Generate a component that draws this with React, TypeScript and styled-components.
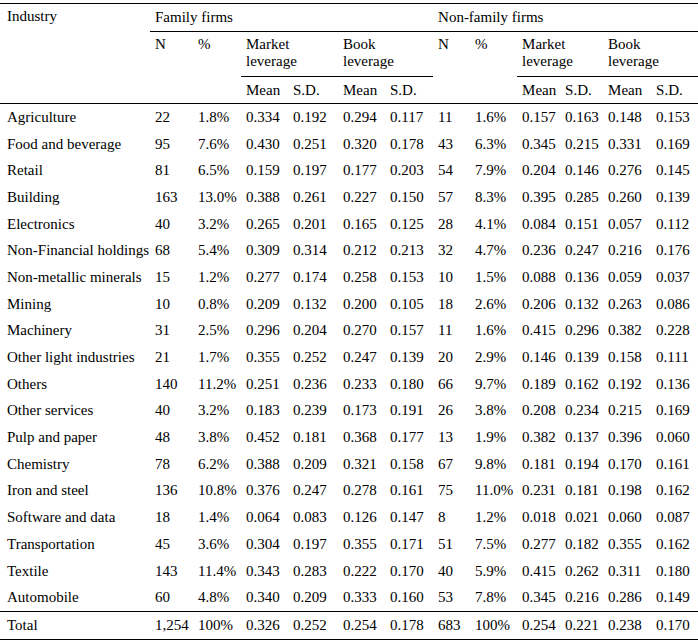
import React from "react";
import styled, { createGlobalStyle } from "styled-components";

const Global = createGlobalStyle`
  html, body { margin: 0; padding: 0; background: #fff; }
  body { font-family: "Liberation Serif", "Times New Roman", serif; color: #000; }
`;

const Table = styled.table`
  margin-top: 3px;
  width: 698px;
  table-layout: fixed;
  border-collapse: separate;
  border-spacing: 0;
  font-family: "Liberation Serif", "Times New Roman", serif;
  font-size: 15px;
  line-height: 17px;
  color: #000;
`;

const Head = styled.th<{ $top?: boolean; $bottom?: boolean; $first?: boolean; $mid?: boolean }>`
  font-family: "Liberation Serif", "Times New Roman", serif;
  font-size: 15px;
  line-height: 17px;
  font-weight: normal;
  text-align: left;
  vertical-align: ${(p) => (p.$mid ? "middle" : "top")};
  padding: ${(p) => (p.$mid ? 0 : 4)}px 0 0 ${(p) => (p.$first ? 7 : 5)}px;
  border-top: ${(p) => (p.$top ? "1px solid #000" : "none")};
  border-bottom: ${(p) => (p.$bottom ? "1px solid #000" : "none")};
  white-space: nowrap;
`;

const HeadRow = styled.tr<{ $h: number }>`
  height: ${(p) => p.$h}px;
`;

const BodyRow = styled.tr<{ $total?: boolean }>`
  height: ${(p) => (p.$total ? 29 : 26.7)}px;
`;

const Cell = styled.td<{ $first?: boolean; $total?: boolean }>`
  font-family: "Liberation Serif", "Times New Roman", serif;
  font-size: 15px;
  line-height: 17px;
  padding: 0 0 0 ${(p) => (p.$first ? 7 : 5)}px;
  vertical-align: middle;
  white-space: nowrap;
  border-top: ${(p) => (p.$total ? "1px solid #000" : "none")};
  border-bottom: ${(p) => (p.$total ? "1px solid #000" : "none")};
`;

const widths = [150, 43, 48, 47, 50, 47, 48, 37, 47, 43, 43, 48, 47];

type Row = [string, ...string[]];

const rows: Row[] = [
  ["Agriculture", "22", "1.8%", "0.334", "0.192", "0.294", "0.117", "11", "1.6%", "0.157", "0.163", "0.148", "0.153"],
  ["Food and beverage", "95", "7.6%", "0.430", "0.251", "0.320", "0.178", "43", "6.3%", "0.345", "0.215", "0.331", "0.169"],
  ["Retail", "81", "6.5%", "0.159", "0.197", "0.177", "0.203", "54", "7.9%", "0.204", "0.146", "0.276", "0.145"],
  ["Building", "163", "13.0%", "0.388", "0.261", "0.227", "0.150", "57", "8.3%", "0.395", "0.285", "0.260", "0.139"],
  ["Electronics", "40", "3.2%", "0.265", "0.201", "0.165", "0.125", "28", "4.1%", "0.084", "0.151", "0.057", "0.112"],
  ["Non-Financial holdings", "68", "5.4%", "0.309", "0.314", "0.212", "0.213", "32", "4.7%", "0.236", "0.247", "0.216", "0.176"],
  ["Non-metallic minerals", "15", "1.2%", "0.277", "0.174", "0.258", "0.153", "10", "1.5%", "0.088", "0.136", "0.059", "0.037"],
  ["Mining", "10", "0.8%", "0.209", "0.132", "0.200", "0.105", "18", "2.6%", "0.206", "0.132", "0.263", "0.086"],
  ["Machinery", "31", "2.5%", "0.296", "0.204", "0.270", "0.157", "11", "1.6%", "0.415", "0.296", "0.382", "0.228"],
  ["Other light industries", "21", "1.7%", "0.355", "0.252", "0.247", "0.139", "20", "2.9%", "0.146", "0.139", "0.158", "0.111"],
  ["Others", "140", "11.2%", "0.251", "0.236", "0.233", "0.180", "66", "9.7%", "0.189", "0.162", "0.192", "0.136"],
  ["Other services", "40", "3.2%", "0.183", "0.239", "0.173", "0.191", "26", "3.8%", "0.208", "0.234", "0.215", "0.169"],
  ["Pulp and paper", "48", "3.8%", "0.452", "0.181", "0.368", "0.177", "13", "1.9%", "0.382", "0.137", "0.396", "0.060"],
  ["Chemistry", "78", "6.2%", "0.388", "0.209", "0.321", "0.158", "67", "9.8%", "0.181", "0.194", "0.170", "0.161"],
  ["Iron and steel", "136", "10.8%", "0.376", "0.247", "0.278", "0.161", "75", "11.0%", "0.231", "0.181", "0.198", "0.162"],
  ["Software and data", "18", "1.4%", "0.064", "0.083", "0.126", "0.147", "8", "1.2%", "0.018", "0.021", "0.060", "0.087"],
  ["Transportation", "45", "3.6%", "0.304", "0.197", "0.355", "0.171", "51", "7.5%", "0.277", "0.182", "0.355", "0.162"],
  ["Textile", "143", "11.4%", "0.343", "0.283", "0.222", "0.170", "40", "5.9%", "0.415", "0.262", "0.311", "0.180"],
  ["Automobile", "60", "4.8%", "0.340", "0.209", "0.333", "0.160", "53", "7.8%", "0.345", "0.216", "0.286", "0.149"],
];

const total: Row = ["Total", "1,254", "100%", "0.326", "0.252", "0.254", "0.178", "683", "100%", "0.254", "0.221", "0.238", "0.170"];

export default function App() {
  return (
    <>
      <Global />
      <Table>
        <colgroup>
          {widths.map((w, i) => (
            <col key={i} style={{ width: w }} />
          ))}
        </colgroup>
        <thead>
          <HeadRow $h={29}>
            <Head rowSpan={3} $top $bottom $first>Industry</Head>
            <Head colSpan={6} $top $bottom $mid>Family firms</Head>
            <Head colSpan={6} $top $bottom $mid>Non-family firms</Head>
          </HeadRow>
          <HeadRow $h={45}>
            <Head rowSpan={2} $bottom>N</Head>
            <Head rowSpan={2} $bottom>%</Head>
            <Head colSpan={2} $bottom>Market<br />leverage</Head>
            <Head colSpan={2} $bottom>Book<br />leverage</Head>
            <Head rowSpan={2} $bottom>N</Head>
            <Head rowSpan={2} $bottom>%</Head>
            <Head colSpan={2} $bottom>Market<br />leverage</Head>
            <Head colSpan={2} $bottom>Book<br />leverage</Head>
          </HeadRow>
          <HeadRow $h={27}>
            {["Mean", "S.D.", "Mean", "S.D.", "Mean", "S.D.", "Mean", "S.D."].map((t, i) => (
              <Head key={i} $bottom $mid>{t}</Head>
            ))}
          </HeadRow>
        </thead>
        <tbody>
          {rows.map((r) => (
            <BodyRow key={r[0]}>
              {r.map((v, i) => (
                <Cell key={i} $first={i === 0}>{v}</Cell>
              ))}
            </BodyRow>
          ))}
          <BodyRow $total>
            {total.map((v, i) => (
              <Cell key={i} $first={i === 0} $total>{v}</Cell>
            ))}
          </BodyRow>
        </tbody>
      </Table>
    </>
  );
}
